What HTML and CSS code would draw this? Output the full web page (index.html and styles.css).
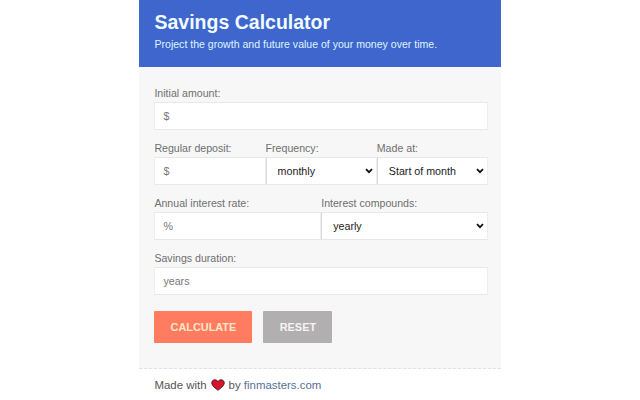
FILE: index.html
```html
<!DOCTYPE html>
<html lang="en">
<head>
    <meta charset="UTF-8">
    <meta name="viewport" content="width=device-width, initial-scale=1.0">
    <title>Savings Calculator</title>
    <link rel="stylesheet" href="styles.css">
</head>
<body>
    <div class="calculator">
        <div class="header">
            <h1>Savings Calculator</h1>
            <p>Project the growth and future value of your money over time.</p>
        </div>

        <form class="form">
            <div class="row">
                <div class="field">
                    <label for="initial">Initial amount:</label>
                    <input id="initial" type="text" placeholder="$">
                </div>
            </div>
            <div class="row">
                <div class="field">
                    <label for="deposit">Regular deposit:</label>
                    <input id="deposit" type="text" placeholder="$">
                </div>
                <div class="field">
                    <label for="frequency">Frequency:</label>
                    <div class="select">
                        <select id="frequency">
                            <option>monthly</option>
                        </select>
                        <svg class="arrow" viewBox="0 0 8 6"><path d="M1 1.2 L4 4.2 L7 1.2"/></svg>
                    </div>
                </div>
                <div class="field">
                    <label for="made">Made at:</label>
                    <div class="select">
                        <select id="made">
                            <option>Start of month</option>
                        </select>
                        <svg class="arrow" viewBox="0 0 8 6"><path d="M1 1.2 L4 4.2 L7 1.2"/></svg>
                    </div>
                </div>
            </div>
            <div class="row">
                <div class="field">
                    <label for="rate">Annual interest rate:</label>
                    <input id="rate" type="text" placeholder="%">
                </div>
                <div class="field">
                    <label for="compounds">Interest compounds:</label>
                    <div class="select">
                        <select id="compounds">
                            <option>yearly</option>
                        </select>
                        <svg class="arrow" viewBox="0 0 8 6"><path d="M1 1.2 L4 4.2 L7 1.2"/></svg>
                    </div>
                </div>
            </div>
            <div class="row">
                <div class="field">
                    <label for="duration">Savings duration:</label>
                    <input id="duration" type="text" placeholder="years">
                </div>
            </div>
            <div class="buttons">
                <button class="calculate" type="button">CALCULATE</button>
                <button class="reset" type="reset">RESET</button>
            </div>
        </form>

        <div class="footer">
            <span>Made with</span>
            <svg class="heart" viewBox="0 0 14 12"><path d="M7 11.3 C5 9.6 0.8 7.2 0.8 3.8 C0.8 0.4 5.4 -0.2 7 2.6 C8.6 -0.2 13.2 0.4 13.2 3.8 C13.2 7.2 9 9.6 7 11.3 Z"/></svg>
            <span>by <a href="#">finmasters.com</a></span>
        </div>
    </div>
</body>
</html>
```
FILE: styles.css
```css
* {
    box-sizing: border-box;
}

body {
    margin: 0;
    height: 400px;
    overflow: hidden;
    background-color: #fff;
    font-family: "Liberation Sans", Arial, sans-serif;
}

.calculator {
    width: 362px;
    margin-left: 139px;
}

.header {
    height: 67px;
    padding: 10px 15.5px 0;
    background-color: #3e66cd;
    color: #f0fcff;
}

h1 {
    margin: 0;
    font-size: 19.5px;
    line-height: 24px;
}

.header p {
    margin: 3px 0 0;
    font-size: 10.55px;
    line-height: 15px;
    color: #dff5ff;
}

.form {
    height: 302px;
    padding: 19px 13px 0 15.4px;
    background-color: #f7f7f7;
    border-bottom: 1px dashed #e2e0e2;
}

.row {
    display: flex;
    height: 55px;
}

.field {
    flex: 1 1 0;
    min-width: 0;
}

label {
    display: block;
    height: 16px;
    font-size: 10.6px;
    line-height: 15px;
    color: #6f6f6f;
}

input,
select {
    display: block;
    width: 100%;
    height: 28px;
    margin: 0;
    padding: 0 8px;
    border: 1px solid #e8e8e8;
    border-left-color: #eee;
    border-right-color: #eee;
    border-radius: 0;
    background-color: #fff;
    font-family: inherit;
    font-size: 10.7px;
    color: #222;
}

input::placeholder {
    color: #777;
}

select {
    appearance: none;
    padding-left: 11px;
    border-left-color: #d8d8d8;
}

.select {
    position: relative;
}

.arrow {
    position: absolute;
    right: 4px;
    top: 11px;
    width: 8px;
    height: 6px;
    fill: none;
    stroke: #111;
    stroke-width: 1.8;
}

.buttons {
    display: flex;
    gap: 11px;
    margin-top: 5px;
}

button {
    height: 32px;
    padding: 0;
    border: none;
    border-radius: 1px;
    font-family: inherit;
    font-size: 10.9px;
    font-weight: bold;
}

.calculate {
    width: 98px;
    background-color: #ff7c60;
    color: #ffe6c8;
}

.reset {
    width: 69px;
    background-color: #b1afaf;
    color: #f5f5f5;
}

.footer {
    display: flex;
    align-items: center;
    gap: 4px;
    height: 32px;
    padding-left: 15.4px;
    font-size: 11.45px;
    color: #555;
}

.heart {
    width: 14px;
    height: 12px;
    fill: #d8152b;
    stroke: #4a1820;
    stroke-width: 1;
}

.footer a {
    color: #587095;
    text-decoration: none;
}
```
